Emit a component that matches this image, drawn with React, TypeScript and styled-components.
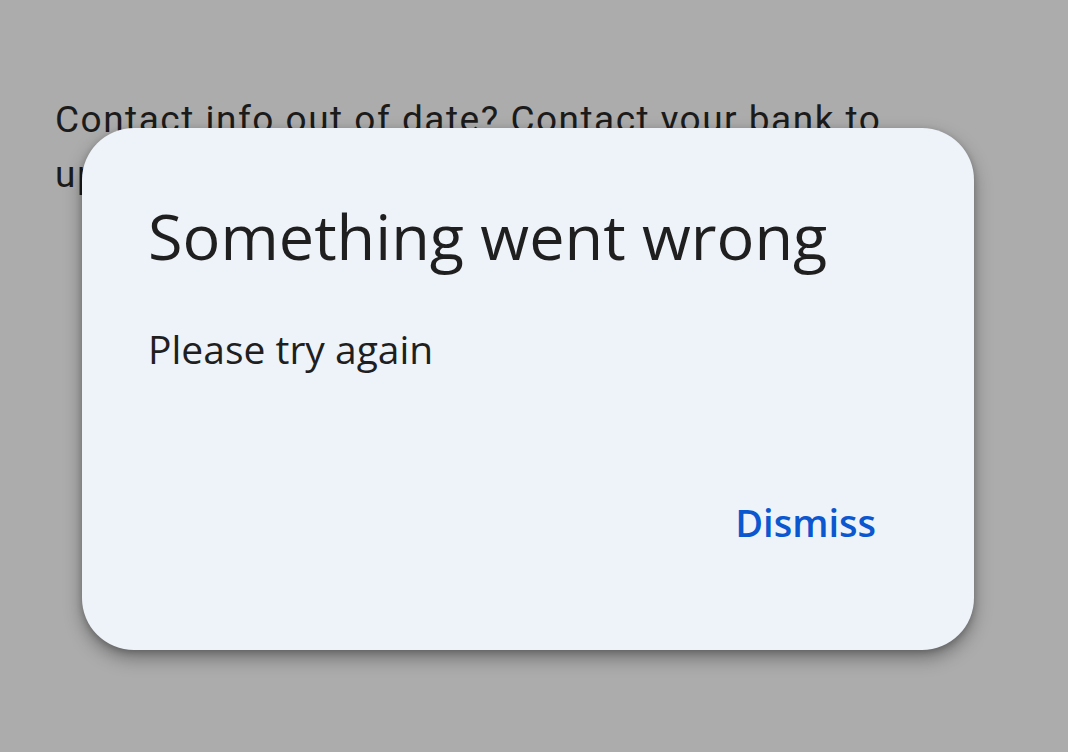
import React from "react";
import styled, { createGlobalStyle } from "styled-components";

const Global = createGlobalStyle`
  html, body { margin: 0; padding: 0; }
  body { width: 1068px; height: 752px; overflow: hidden; background: #acacac; }
`;

const Page = styled.div`
  position: relative;
  width: 1068px;
  height: 752px;
  background: #acacac;
  box-sizing: border-box;
  padding: 92px 40px 0 55px;
`;

const BackText = styled.p`
  margin: 0;
  font-family: Roboto, "Liberation Sans", sans-serif;
  font-size: 37px;
  letter-spacing: 1.5px;
  line-height: 55px;
  color: #1b1b1b;
  width: 870px;
`;

const Dialog = styled.div`
  position: absolute;
  left: 82px;
  top: 128px;
  width: 892px;
  height: 522px;
  box-sizing: border-box;
  background: #eef3fa;
  border-radius: 52px;
  box-shadow: 0 8px 18px rgba(0, 0, 0, 0.35), 0 2px 6px rgba(0, 0, 0, 0.2);
  padding: 70px 98px 0 66px;
  display: flex;
  flex-direction: column;
`;

const Title = styled.h1`
  margin: 0;
  font-family: "Open Sans", "Noto Sans", sans-serif;
  font-weight: 400;
  font-size: 63px;
  line-height: 76px;
  color: #1f1f1f;
`;

const Body = styled.p`
  margin: 50px 0 0;
  font-family: "Open Sans", "Noto Sans", sans-serif;
  font-size: 39px;
  line-height: 50px;
  color: #1f1f1f;
`;

const Actions = styled.div`
  display: flex;
  justify-content: flex-end;
  margin-top: 123px;
`;

const TextButton = styled.button`
  border: none;
  background: none;
  padding: 0;
  font-family: "Open Sans", "Noto Sans", sans-serif;
  font-weight: 600;
  font-size: 38px;
  line-height: 50px;
  color: #0b57d0;
  cursor: pointer;
`;

export default function App() {
  return (
    <>
      <Global />
      <Page>
        <BackText>Contact info out of date? Contact your bank to update it</BackText>
        <Dialog role="dialog">
          <Title>Something went wrong</Title>
          <Body>Please try again</Body>
          <Actions>
            <TextButton>Dismiss</TextButton>
          </Actions>
        </Dialog>
      </Page>
    </>
  );
}
